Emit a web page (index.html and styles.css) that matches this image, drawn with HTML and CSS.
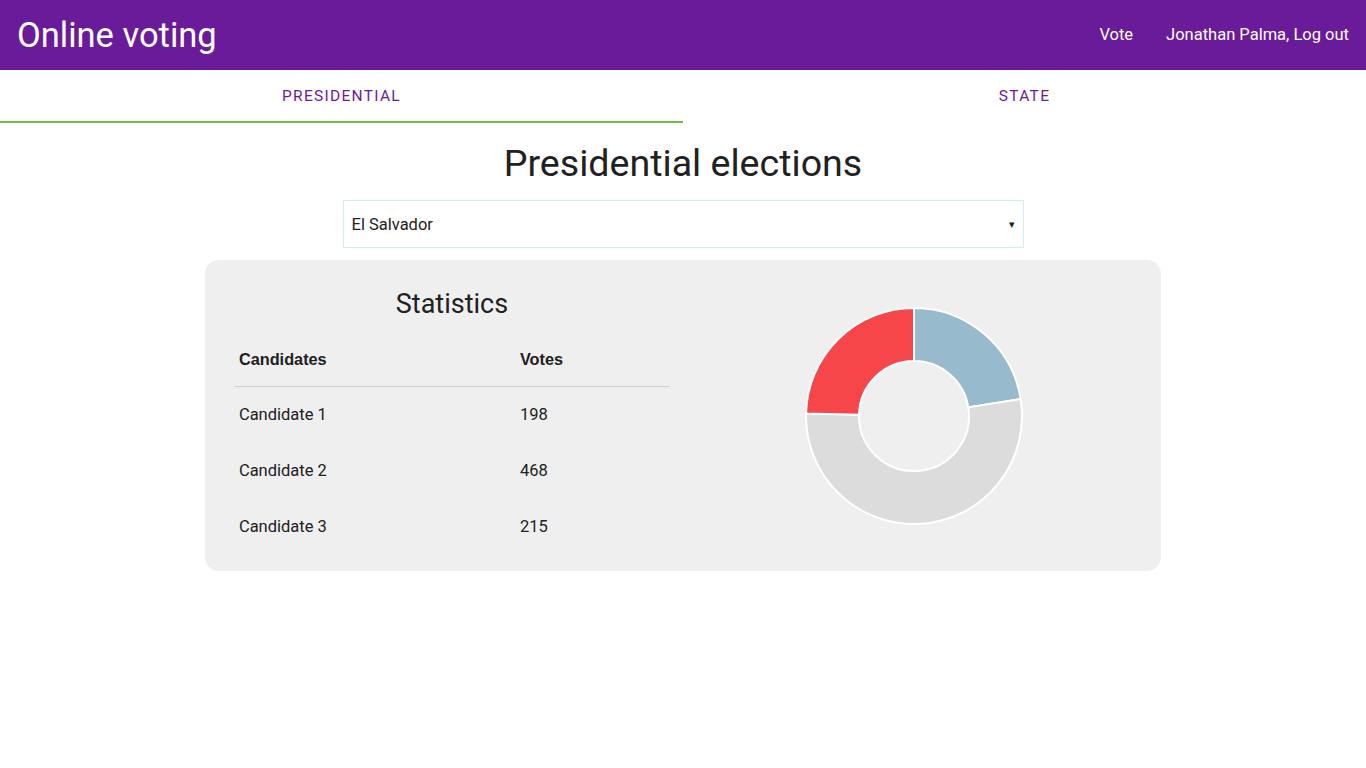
FILE: index.html
```html
<!DOCTYPE html>
<html lang="en">
<head>
<meta charset="utf-8">
<title>Online voting</title>
<link rel="stylesheet" href="styles.css">
</head>
<body>
<header class="nav">
  <a class="brand" href="#">Online voting</a>
  <ul class="nav-links">
    <li><a href="#">Vote</a></li>
    <li><a href="#">Jonathan Palma, Log out</a></li>
  </ul>
</header>
<nav class="tabs">
  <a class="tab active" href="#">Presidential</a>
  <a class="tab" href="#">State</a>
</nav>
<main class="container">
  <h1 class="page-title">Presidential elections</h1>
  <div class="select-wrap">
    <div class="select">
      <span>El Salvador</span>
      <span class="caret">&#9662;</span>
    </div>
  </div>
  <section class="card">
    <div class="col">
      <h2 class="card-title">Statistics</h2>
      <table class="stats">
        <thead>
          <tr><th class="c-name">Candidates</th><th>Votes</th></tr>
        </thead>
        <tbody>
          <tr><td>Candidate 1</td><td>198</td></tr>
          <tr><td>Candidate 2</td><td>468</td></tr>
          <tr><td>Candidate 3</td><td>215</td></tr>
        </tbody>
      </table>
    </div>
    <div class="col chart-col">
      <svg class="donut" width="220" height="220" viewBox="-110 -110 220 220">
        <!-- 198/881, 468/881, 215/881 -->
        <path d="M0,-108 A108,108 0 0,1 106.66,-16.94 L54.31,-8.63 A55,55 0 0,0 0,-55 Z" fill="#97BBCD" stroke="#fff" stroke-width="2"/>
        <path d="M106.66,-16.94 A108,108 0 1,1 -107.97,-2.62 L-54.98,-1.33 A55,55 0 1,0 54.31,-8.63 Z" fill="#DCDCDC" stroke="#fff" stroke-width="2"/>
        <path d="M-107.97,-2.62 A108,108 0 0,1 0,-108 L0,-55 A55,55 0 0,0 -54.98,-1.33 Z" fill="#F7464A" stroke="#fff" stroke-width="2"/>
      </svg>
    </div>
  </section>
</main>
</body>
</html>
```
FILE: styles.css
```css
* { box-sizing: border-box; }
html, body { margin: 0; padding: 0; }
body {
  font-family: Roboto, "Liberation Sans", sans-serif;
  color: #212121;
  background: #fff;
  font-size: 15px;
}
a { text-decoration: none; }

.nav {
  height: 70px;
  background: #6a1b9a;
  display: flex;
  align-items: center;
  justify-content: space-between;
  padding: 0 2px 0 17px;
}
.brand {
  color: #fff;
  font-size: 34.5px;
  line-height: 1;
}
.nav-links {
  list-style: none;
  margin: 0 0 2px;
  padding: 0;
  display: flex;
  gap: 3px;
}
.nav-links a {
  color: #fff;
  font-size: 16.5px;
  padding: 0 15px;
  display: block;
}

.tabs {
  display: flex;
  height: 53px;
}
.tab {
  flex: 1;
  text-align: center;
  color: #6a1b9a;
  text-transform: uppercase;
  font-size: 15.5px;
  letter-spacing: 1.3px;
  padding-top: 17px;
  border-bottom: 2px solid transparent;
}
.tab.active { border-bottom-color: #6fbf43; }

.container {
  width: 70%;
  margin: 0 auto;
}
.page-title {
  margin: 19px 0 0;
  font-weight: 400;
  font-size: 37.6px;
  line-height: 42px;
  text-align: center;
}
.select-wrap {
  display: flex;
  justify-content: center;
  margin-top: 16px;
}
.select {
  width: 681px;
  height: 48px;
  border: 1px solid #d2eef0;
  display: flex;
  align-items: center;
  justify-content: space-between;
  padding: 0 8px 0 8px;
  font-size: 16.5px;
  background: #fff;
}
.caret { font-size: 11px; }

.card {
  margin-top: 12px;
  background: #efefef;
  border-radius: 14px;
  padding: 19px 18px 16px;
  display: flex;
}
.col {
  flex: 1;
  padding: 0 11px;
}
.card-title {
  margin: 9px 0 0;
  font-weight: 400;
  font-size: 27px;
  line-height: 32px;
  text-align: center;
}
.stats {
  width: 100%;
  border-collapse: collapse;
  margin-top: 10px;
  font-size: 16.5px;
}
.stats th, .stats td {
  text-align: left;
  padding: 16px 5px;
  line-height: 24px;
  vertical-align: middle;
}
.stats th {
  font-weight: 700;
  font-family: "Liberation Sans", Arial, sans-serif;
  font-size: 16.3px;
  padding-top: 17px;
  padding-bottom: 15px;
}
.stats thead tr { border-bottom: 1px solid #d0d0d0; }
.c-name { width: 281px; }

.chart-col {
  display: flex;
  justify-content: center;
  padding-top: 27px;
  padding-left: 15px;
}
.donut { display: block; }
```
